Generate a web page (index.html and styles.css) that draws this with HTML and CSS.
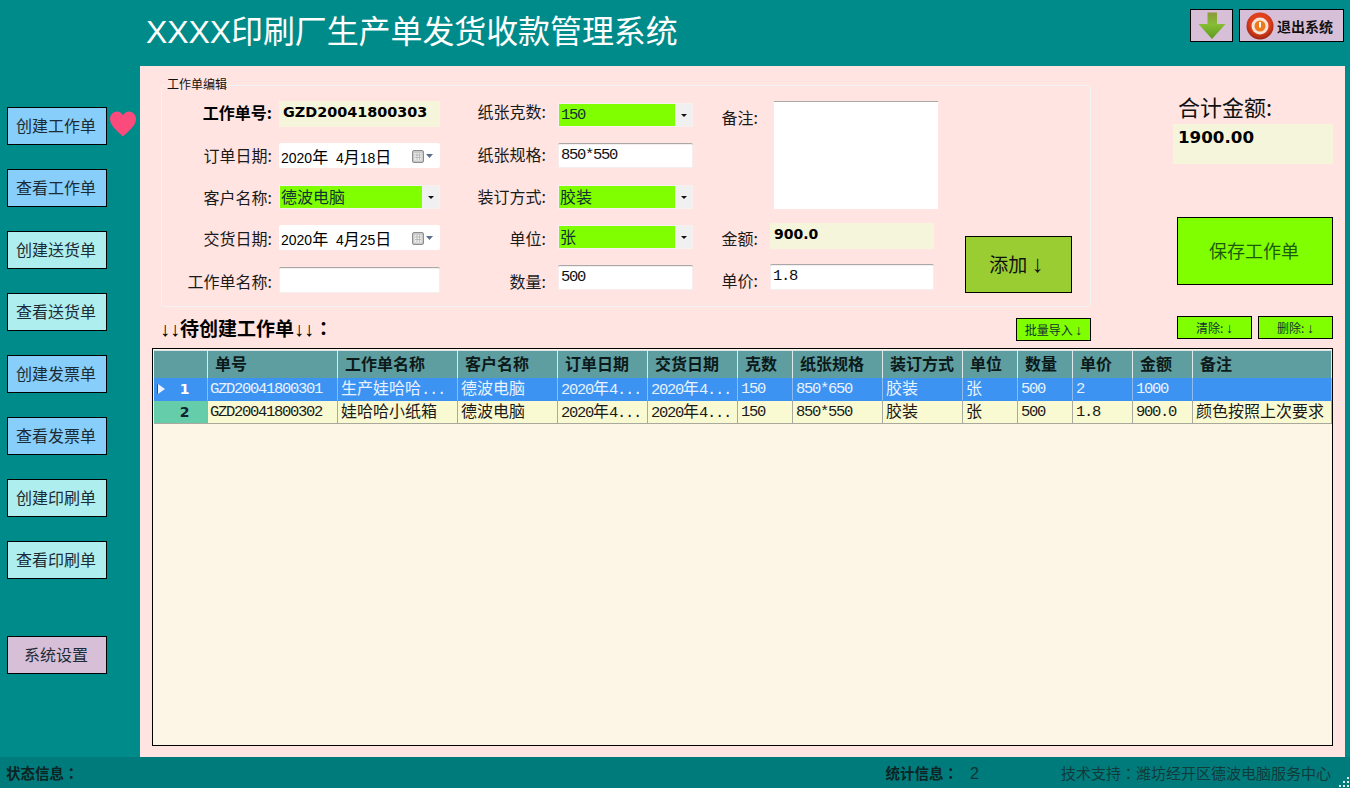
FILE: index.html
```html
<!DOCTYPE html>
<html lang="zh-CN">
<head>
<meta charset="utf-8">
<title>XXXX印刷厂生产单发货收款管理系统</title>
<link rel="stylesheet" href="styles.css">
</head>
<body>
<div class="app">
  <header class="topbar">
    <h1 class="title">XXXX印刷厂生产单发货收款管理系统</h1>
    <div class="top-actions">
      <button class="top-btn top-btn-icon" aria-label="下载">
        <svg width="30" height="30" viewBox="0 0 30 30">
          <defs><linearGradient id="ga" x1="0" y1="0" x2="0" y2="1"><stop offset="0" stop-color="#8a9a3c"/><stop offset="0.45" stop-color="#86bd35"/><stop offset="1" stop-color="#5c9a1c"/></linearGradient></defs>
          <path d="M10.500 1.500H20V13H28.500L15 28L1.500 13H10.500Z" fill="url(#ga)"/>
        </svg>
      </button>
      <button class="top-btn top-btn-exit">
        <svg width="28" height="28" viewBox="0 0 28 28">
          <defs><radialGradient id="gr" cx="0.5" cy="0.4" r="0.6"><stop offset="0.6" stop-color="#e0401c"/><stop offset="1" stop-color="#9c2410"/></radialGradient></defs>
          <circle cx="14" cy="14" r="13.500" fill="url(#gr)"/>
          <circle cx="14" cy="14" r="8.500" fill="#f6e4d8"/>
          <circle cx="14" cy="14" r="5.500" fill="#ee7a1e"/>
          <rect x="13" y="10" width="2" height="5.500" fill="#fff"/>
        </svg>
        <span>退出系统</span>
      </button>
    </div>
  </header>

  <div class="main">
    <nav class="sidebar">
      <div class="nav-item"><button class="nav-btn blue">创建工作单</button>
        <svg class="heart" width="28" height="26" viewBox="0 0 28 26"><path d="M14 25.500C9 20.500 1 15 1 8C1 3.500 4.500 .5 8 .5C10.500 .5 12.800 2 14 4.500C15.200 2 17.500 .5 20 .5C23.500 .5 27 3.500 27 8C27 15 19 20.500 14 25.500Z" fill="#fb4a7c"/></svg>
      </div>
      <button class="nav-btn blue">查看工作单</button>
      <button class="nav-btn aqua">创建送货单</button>
      <button class="nav-btn aqua">查看送货单</button>
      <button class="nav-btn blue">创建发票单</button>
      <button class="nav-btn blue">查看发票单</button>
      <button class="nav-btn aqua">创建印刷单</button>
      <button class="nav-btn aqua">查看印刷单</button>
      <button class="nav-btn thistle nav-settings">系统设置</button>
    </nav>

    <section class="panel">
      <div class="upper">
        <div class="upper-left">
          <div class="group">
            <span class="legend">工作单编辑</span>
            <div class="col col-1">
              <div class="row row-42"><label class="lbl strong">工作单号:</label><div class="ctl readonly code">GZD20041800303</div></div>
              <div class="row row-42"><label class="lbl n1">订单日期:</label><div class="ctl date"><span class="date-text">2020<span class="zh">年</span>  4<span class="zh">月</span>18<span class="zh">日</span></span><svg class="cal" width="21" height="13" viewBox="0 0 21 13"><rect x=".5" y=".5" width="11" height="12" rx="1.500" fill="#c9c9c9" stroke="#8d8d8d"/><rect x="2.500" y="3" width="7" height="7.500" fill="#eee"/><path d="M3 5H9M3 7.500H9M5 3V10M7.500 3V10" stroke="#aaa" stroke-width=".7"/><path d="M14 4H21L17.500 8Z" fill="#5b7088"/></svg></div></div>
              <div class="row row-40"><label class="lbl n1">客户名称:</label><div class="ctl select"><span class="sel-val zh">德波电脑</span><span class="sel-btn"></span></div></div>
              <div class="row row-42"><label class="lbl n2">交货日期:</label><div class="ctl date"><span class="date-text">2020<span class="zh">年</span>  4<span class="zh">月</span>25<span class="zh">日</span></span><svg class="cal" width="21" height="13" viewBox="0 0 21 13"><rect x=".5" y=".5" width="11" height="12" rx="1.500" fill="#c9c9c9" stroke="#8d8d8d"/><rect x="2.500" y="3" width="7" height="7.500" fill="#eee"/><path d="M3 5H9M3 7.500H9M5 3V10M7.500 3V10" stroke="#aaa" stroke-width=".7"/><path d="M14 4H21L17.500 8Z" fill="#5b7088"/></svg></div></div>
              <div class="row row-42"><label class="lbl n3">工作单名称:</label><div class="ctl input"></div></div>
            </div>
            <div class="col col-2">
              <div class="row row-40"><label class="lbl up3">纸张克数:</label><div class="ctl select"><span class="sel-val mono">150</span><span class="sel-btn"></span></div></div>
              <div class="row row-42"><label class="lbl">纸张规格:</label><div class="ctl input mono">850*550</div></div>
              <div class="row row-40"><label class="lbl">装订方式:</label><div class="ctl select"><span class="sel-val zh">胶装</span><span class="sel-btn"></span></div></div>
              <div class="row row-40"><label class="lbl n2">单位:</label><div class="ctl select"><span class="sel-val zh">张</span><span class="sel-btn"></span></div></div>
              <div class="row row-42"><label class="lbl n5">数量:</label><div class="ctl input mono">500</div></div>
            </div>
            <div class="col col-3">
              <div class="row row-122"><label class="lbl n5">备注:</label><div class="ctl memo"></div></div>
              <div class="row row-41"><label class="lbl n4">金额:</label><div class="ctl readonly amount">900.0</div></div>
              <div class="row row-41"><label class="lbl n5">单价:</label><div class="ctl input mono price">1.8</div></div>
            </div>
            <button class="add-btn">添加 <b>↓</b></button>
          </div>
          <div class="list-head">
            <h2 class="list-title"><span class="arr">↓↓</span>待创建工作单<span class="arr">↓↓</span><span class="cl" lang="zh-Hant">：</span></h2>
            <button class="mini-btn">批量导入 <span class="arr">↓</span></button>
          </div>
        </div>
        <aside class="summary">
          <div class="sum-label">合计金额:</div>
          <div class="sum-value">1900.00</div>
          <button class="save-btn">保存工作单</button>
          <div class="sum-actions">
            <button class="mini-btn">清除: <span class="arr">↓</span></button>
            <button class="mini-btn">删除: <span class="arr">↓</span></button>
          </div>
        </aside>
      </div>

      <div class="grid-wrap">
        <table class="grid">
          <colgroup>
            <col class="c54"><col class="c130"><col class="c120"><col class="c100"><col class="c90"><col class="c90"><col class="c55"><col class="c90"><col class="c80"><col class="c55"><col class="c55"><col class="c60"><col class="c60"><col class="c139">
          </colgroup>
          <thead>
            <tr><th></th><th>单号</th><th>工作单名称</th><th>客户名称</th><th>订单日期</th><th>交货日期</th><th>克数</th><th>纸张规格</th><th>装订方式</th><th>单位</th><th>数量</th><th>单价</th><th>金额</th><th>备注</th></tr>
          </thead>
          <tbody>
            <tr class="selected">
              <td class="rowhead"><span class="caret"></span>1</td>
              <td>GZD20041800301</td><td><span class="zh">生产娃哈哈</span>...</td><td><span class="zh">德波电脑</span></td><td>2020<span class="zh">年</span>4...</td><td>2020<span class="zh">年</span>4...</td><td>150</td><td>850*650</td><td><span class="zh">胶装</span></td><td><span class="zh">张</span></td><td>500</td><td>2</td><td>1000</td><td></td>
            </tr>
            <tr class="normal">
              <td class="rowhead">2</td>
              <td>GZD20041800302</td><td><span class="zh">娃哈哈小纸箱</span></td><td><span class="zh">德波电脑</span></td><td>2020<span class="zh">年</span>4...</td><td>2020<span class="zh">年</span>4...</td><td>150</td><td>850*550</td><td><span class="zh">胶装</span></td><td><span class="zh">张</span></td><td>500</td><td>1.8</td><td>900.0</td><td><span class="zh">颜色按照上次要求</span></td>
            </tr>
          </tbody>
        </table>
      </div>
    </section>
  </div>

  <footer class="status">
    <span class="st-bold">状态信息<span class="cl" lang="zh-Hant">：</span></span>
    <div class="st-right">
      <span class="st-stat"><span class="st-bold">统计信息<span class="cl" lang="zh-Hant">：</span></span><span class="st-num">2</span></span>
      <span class="st-tech">技术支持<span class="cl" lang="zh-Hant">：</span>潍坊经开区德波电脑服务中心</span>
    </div>
    <svg class="grip" width="12" height="12" viewBox="0 0 12 12" fill="#d8eeee"><rect x="9" y="1" width="2" height="2"/><rect x="5" y="5" width="2" height="2"/><rect x="9" y="5" width="2" height="2"/><rect x="1" y="9" width="2" height="2"/><rect x="5" y="9" width="2" height="2"/><rect x="9" y="9" width="2" height="2"/></svg>
  </footer>
</div>
</body>
</html>
```

FILE: styles.css
```css
* { box-sizing: border-box; }
html, body { margin: 0; padding: 0; }
body {
  width: 1350px;
  height: 788px;
  overflow: hidden;
  background: #008b8b;
  font-family: "Noto Sans CJK SC", sans-serif;
  font-size: 16px;
  color: #111;
}
button { font-family: inherit; padding: 0; cursor: default; }
.app { display: flex; flex-direction: column; height: 788px; }
.arr { font-family: "Liberation Sans", sans-serif; font-size: 14px; }
.cl { font-family: "Noto Sans CJK TC", sans-serif; }

/* header */
.topbar { height: 66px; flex: none; display: flex; justify-content: space-between; align-items: flex-start; padding: 9px 6px 0 146px; }
.title { margin: 0; font-family: "Liberation Sans", "Noto Sans CJK SC", sans-serif; font-size: 32px; font-weight: 400; letter-spacing: -0.1px; line-height: 46px; color: #fff; }
.top-actions { display: flex; gap: 6px; }
.top-btn { height: 33px; background: #d8bfd8; border: 1px solid #000; display: flex; align-items: center; }
.top-btn-icon { width: 43px; justify-content: center; }
.top-btn-exit { width: 105px; padding-left: 6px; gap: 3px; font-size: 14px; font-weight: 700; color: #111; }

/* sidebar */
.main { flex: 1; display: flex; min-height: 0; }
.sidebar { width: 140px; flex: none; padding: 41px 0 0 7px; display: flex; flex-direction: column; gap: 24px; }
.nav-item { display: flex; align-items: center; gap: 2px; height: 38px; }
.nav-btn { width: 100px; height: 38px; flex: none; border: 1px solid #000; padding: 0 2px 2px 0; font-size: 16px; color: #1c2c36; }
.blue { background: #87cefa; }
.aqua { background: #afeeee; }
.thistle { background: #d8bfd8; }
.nav-settings { margin-top: 33px; }
.heart { margin-top: -4px; }

/* panel */
.panel { width: 1205px; flex: none; background: #ffe4e1; display: flex; flex-direction: column; }
.upper { display: flex; height: 282px; flex: none; }
.upper-left { width: 951px; flex: none; padding: 19px 0 0 21px; }
.group { position: relative; width: 930px; height: 222px; border: 1px solid #f3f3f3; border-radius: 3px; display: flex; }
.legend { position: absolute; left: 4px; top: -10px; background: #ffe4e1; padding: 0 1px; font-size: 12px; line-height: 16px; color: #111; }

.col { display: flex; flex-direction: column; flex: none; }
.col-1 { width: 278px; padding-top: 15px; }
.col-2 { width: 253px; padding-top: 17px; }
.col-3 { width: 245px; padding-top: 15px; }
.row { display: flex; align-items: flex-start; flex: none; }
.row-40 { height: 40px; }
.row-41 { height: 41px; }
.row-42 { height: 42px; }
.row-122 { height: 122px; }
.lbl { flex: 1; text-align: right; line-height: 22px; font-size: 16px; white-space: nowrap; color: #1a1a1a; }
.strong { font-weight: 700; color: #000; }
.up3 { margin-top: -3px; }
.n1 { margin-top: 1px; }
.n2 { margin-top: 2px; }
.n3 { margin-top: 3px; }
.n4 { margin-top: 4px; }
.n5 { margin-top: 5px; }

.ctl { flex: none; margin-left: 7px; }
.col-1 .ctl { width: 161px; }
.col-2 .ctl { width: 135px; margin-left: 12px; }
.col-3 .lbl { flex: none; width: 65px; }
.col-3 .ctl { width: 164px; margin-left: 12px; }
.readonly { height: 26px; background: #f5f5dc; }
.code { font-family: "DejaVu Sans", sans-serif; font-weight: 700; font-size: 14.4px; line-height: 22px; padding-left: 4px; color: #000; }
.amount { font-family: "DejaVu Sans", sans-serif; font-weight: 700; font-size: 14px; line-height: 22px; padding-left: 4px; color: #000; }
.input { height: 26px; background: #fff; border-top: 1px solid #a8a8a8; border-radius: 2px; box-shadow: 0 0 0 1px #f4eeee inset; }
.mono, .grid td { font-family: "Liberation Mono", "Noto Sans CJK SC", monospace; font-size: 15.5px; letter-spacing: -1.3px; }
.input.mono { line-height: 23px; padding-left: 3px; color: #111; }
.col-2 .input { height: 25px; }
.date { height: 25px; background: #fff; display: flex; align-items: center; justify-content: space-between; padding: 0 7px 0 2px; border-radius: 2px; }
.date-text { font-family: "Liberation Sans", "Noto Sans CJK SC", sans-serif; font-size: 14px; white-space: pre; color: #000; }
.cal { flex: none; margin-top: 1px; }
.zh { font-family: "Noto Sans CJK SC", sans-serif; font-size: 16px; letter-spacing: 0; }
.select { height: 24px; display: flex; background: #f0f0f0; border: 1px solid #f8f0f0; }
.sel-val { flex: 1; background: #7fff00; padding-left: 1px; line-height: 20px; white-space: nowrap; color: #133; }
.sel-val.mono { line-height: 22px; padding-left: 2px; }
.sel-btn { width: 17px; flex: none; position: relative; }
.sel-btn::after { content: ""; position: absolute; left: 6px; top: 10px; border: 3px solid transparent; border-top: 3px solid #111; border-bottom: 0; }
.memo { height: 108px; background: #fff; border-top: 1px solid #a8a8a8; }
.col-3 .memo { margin-left: 16px; }
.price { width: 164px; }
.add-btn { width: 107px; height: 57px; flex: none; margin: 150px 0 0 27px; padding: 0 4px 3px 0; background: #9acd32; border: 1px solid #000; font-size: 19px; color: #111; }
.add-btn b { font-family: "Liberation Sans", sans-serif; font-size: 24px; line-height: 20px; }

.list-head { display: flex; justify-content: space-between; align-items: center; width: 930px; margin-top: 11px; height: 23px; }
.list-title { margin: -3px 0 0 -1px; font-size: 19px; font-weight: 700; line-height: 23px; color: #000; white-space: nowrap; }
.list-title .arr { font-size: 20px; }
.mini-btn { width: 75px; height: 23px; background: #7fff00; border: 1px solid #000; font-size: 12px; color: #133; }

.summary { width: 160px; flex: none; margin-left: 82px; padding-top: 29px; display: flex; flex-direction: column; }
.sum-label { height: 20px; line-height: 22px; font-size: 22px; padding-left: 5px; color: #111; white-space: nowrap; }
.sum-value { height: 40px; margin-top: 9px; background: #f5f5dc; padding-left: 5px; font-family: "DejaVu Sans", sans-serif; font-weight: 700; font-size: 16.7px; line-height: 26px; color: #000; }
.save-btn { width: 156px; height: 68px; margin: 53px 0 0 4px; padding: 0 2px 2px 0; background: #7fff00; border: 1px solid #000; font-size: 18px; color: #1d5c10; }
.sum-actions { display: flex; gap: 6px; margin: 31px 0 0 4px; }

/* data grid */
.grid-wrap { width: 1181px; height: 398px; margin-left: 12px; flex: none; border: 1px solid #000; background: #fdf5e6; padding: 1px 0 0 1px; }
.grid { width: 1178px; table-layout: fixed; border-collapse: separate; border-spacing: 0; }
.c54 { width: 54px; } .c55 { width: 55px; } .c60 { width: 60px; } .c80 { width: 80px; } .c90 { width: 90px; }
.c100 { width: 100px; } .c120 { width: 120px; } .c130 { width: 130px; } .c139 { width: 139px; }
.grid th { height: 28px; background: #5f9ea0; border-top: 1px solid #d8e4e4; border-right: 1px solid #dfe9e9; padding: 0 0 3px 7px; text-align: left; font-size: 16px; font-weight: 700; line-height: 20px; color: #0c1a1a; }
.grid td { height: 23px; padding: 0 0 1px 3px; white-space: nowrap; border-right: 1px solid #a9a9a0; border-bottom: 1px solid #a9a9a0; line-height: 18px; }
.grid td:nth-child(2) { padding-left: 2px; }
.grid .zh { line-height: 1; }
.selected td { background: #3c93f2; color: #e8f2ff; border-right-color: #8fbdf0; border-bottom-color: #3c93f2; }
.normal td { background: #fafad2; color: #1a1a1a; }
.grid .rowhead { position: relative; padding: 0 0 0 8px; text-align: center; font-family: "DejaVu Sans", sans-serif; font-size: 14px; letter-spacing: 0; font-weight: 700; }
.normal .rowhead { background: #66cdaa; color: #123; }
.selected .rowhead { color: #fff; }
.caret { position: absolute; left: 4px; top: 6px; border: 5px solid transparent; border-left: 7px solid #e9f3ff; border-right: 0; filter: drop-shadow(-1px 0 0 #33506e); }

/* status bar */
.status { position: relative; height: 31px; flex: none; background: #007b7b; display: flex; align-items: center; padding: 0 19px 1px 6px; font-size: 14.5px; color: #0d2424; }
.st-bold { font-weight: 700; }
.st-right { margin-left: auto; display: flex; gap: 82px; align-items: center; }
.st-stat { display: flex; gap: 12px; align-items: baseline; }
.st-num { font-family: "Liberation Sans", sans-serif; font-size: 16px; width: 9px; color: #0d3434; }
.st-tech { font-size: 15px; color: #123a3a; }
.grip { position: absolute; right: 0; bottom: 0; }
```
